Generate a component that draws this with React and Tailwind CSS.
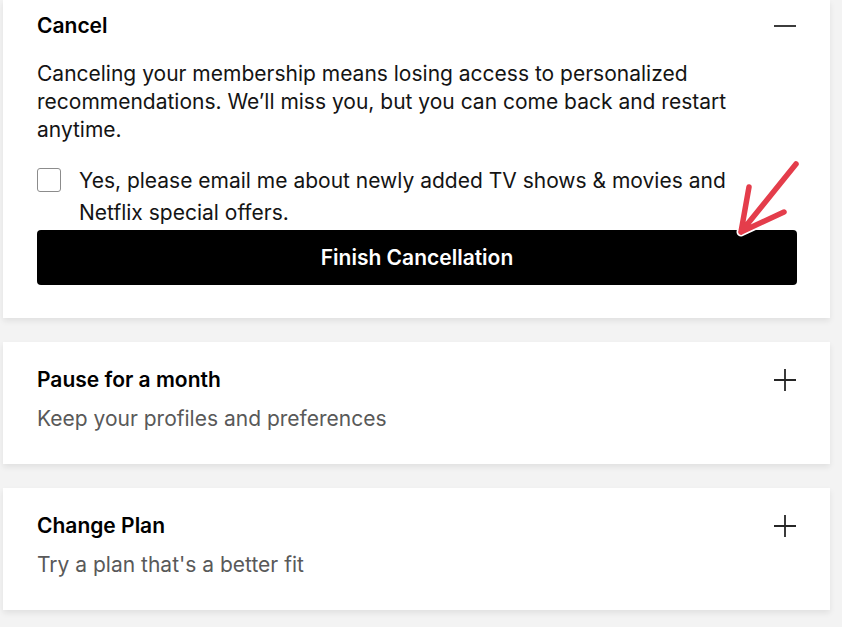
import React from "react";

const font = { fontFamily: "Inter, 'Noto Sans', sans-serif" };

const MinusIcon = () => (
  <svg width="24" height="24" viewBox="0 0 24 24" className="shrink-0">
    <path d="M1 12h22" stroke="#262626" strokeWidth="1.8" />
  </svg>
);

const PlusIcon = () => (
  <svg width="24" height="24" viewBox="0 0 24 24" className="shrink-0">
    <path d="M1 12h22M12 1v22" stroke="#262626" strokeWidth="1.8" />
  </svg>
);

const Arrow = () => (
  <svg
    width="80"
    height="90"
    viewBox="0 0 80 90"
    className="absolute left-[727px] top-[155px] pointer-events-none"
  >
    <g fill="none" strokeLinecap="round" strokeLinejoin="round">
      <path d="M66 9 L11 77 M19 32 L11 77 L54 57" stroke="#ffffff" strokeWidth="9" />
      <path d="M66 9 L11 77 M19 32 L11 77 L54 57" stroke="#e43d4b" strokeWidth="5.5" />
    </g>
  </svg>
);

const OptionCard = ({ title, subtitle }) => (
  <div className="bg-white shadow-[0_3px_6px_rgba(0,0,0,0.08)] pl-[34px] pr-[33px] pt-[24px] pb-[31px]">
    <div className="flex items-center justify-between h-[28px]">
      <h3 className="text-[21px] leading-[28px] font-semibold text-black">{title}</h3>
      <PlusIcon />
    </div>
    <p className="mt-[11px] text-[21px] leading-[28px] text-[#595959]">{subtitle}</p>
  </div>
);

export default function App() {
  return (
    <div className="w-full min-h-screen bg-[#f3f3f3] pl-[3px] pr-[12px] pb-[20px]" style={font}>
      <div className="flex flex-col gap-[24px]">
        {/* Cancel card (expanded) */}
        <div className="relative bg-white shadow-[0_3px_6px_rgba(0,0,0,0.08)] pl-[34px] pr-[33px] pt-[12px] pb-[33px]">
          <div className="flex items-center justify-between h-[28px]">
            <h3 className="text-[21px] leading-[28px] font-semibold text-black">Cancel</h3>
            <MinusIcon />
          </div>
          <p className="mt-[20px] text-[21px] leading-[28px] text-[#141414] max-w-[700px]">
            Canceling your membership means losing access to personalized recommendations. We’ll miss you, but you can come back and restart anytime.
          </p>
          <label className="mt-[21px] flex items-start gap-[18px]">
            <span className="mt-[3px] w-[24px] h-[24px] shrink-0 border border-[#8c8c8c] rounded-[3px] bg-white" />
            <span className="text-[21px] leading-[32px] text-[#141414] max-w-[680px]">
              Yes, please email me about newly added TV shows &amp; movies and Netflix special offers.
            </span>
          </label>
          <button className="mt-px w-full h-[55px] bg-black text-white rounded-[4px] text-[21px] font-semibold">
            Finish Cancellation
          </button>
          <Arrow />
        </div>

        <OptionCard title="Pause for a month" subtitle="Keep your profiles and preferences" />
        <OptionCard title="Change Plan" subtitle="Try a plan that's a better fit" />
      </div>
    </div>
  );
}
